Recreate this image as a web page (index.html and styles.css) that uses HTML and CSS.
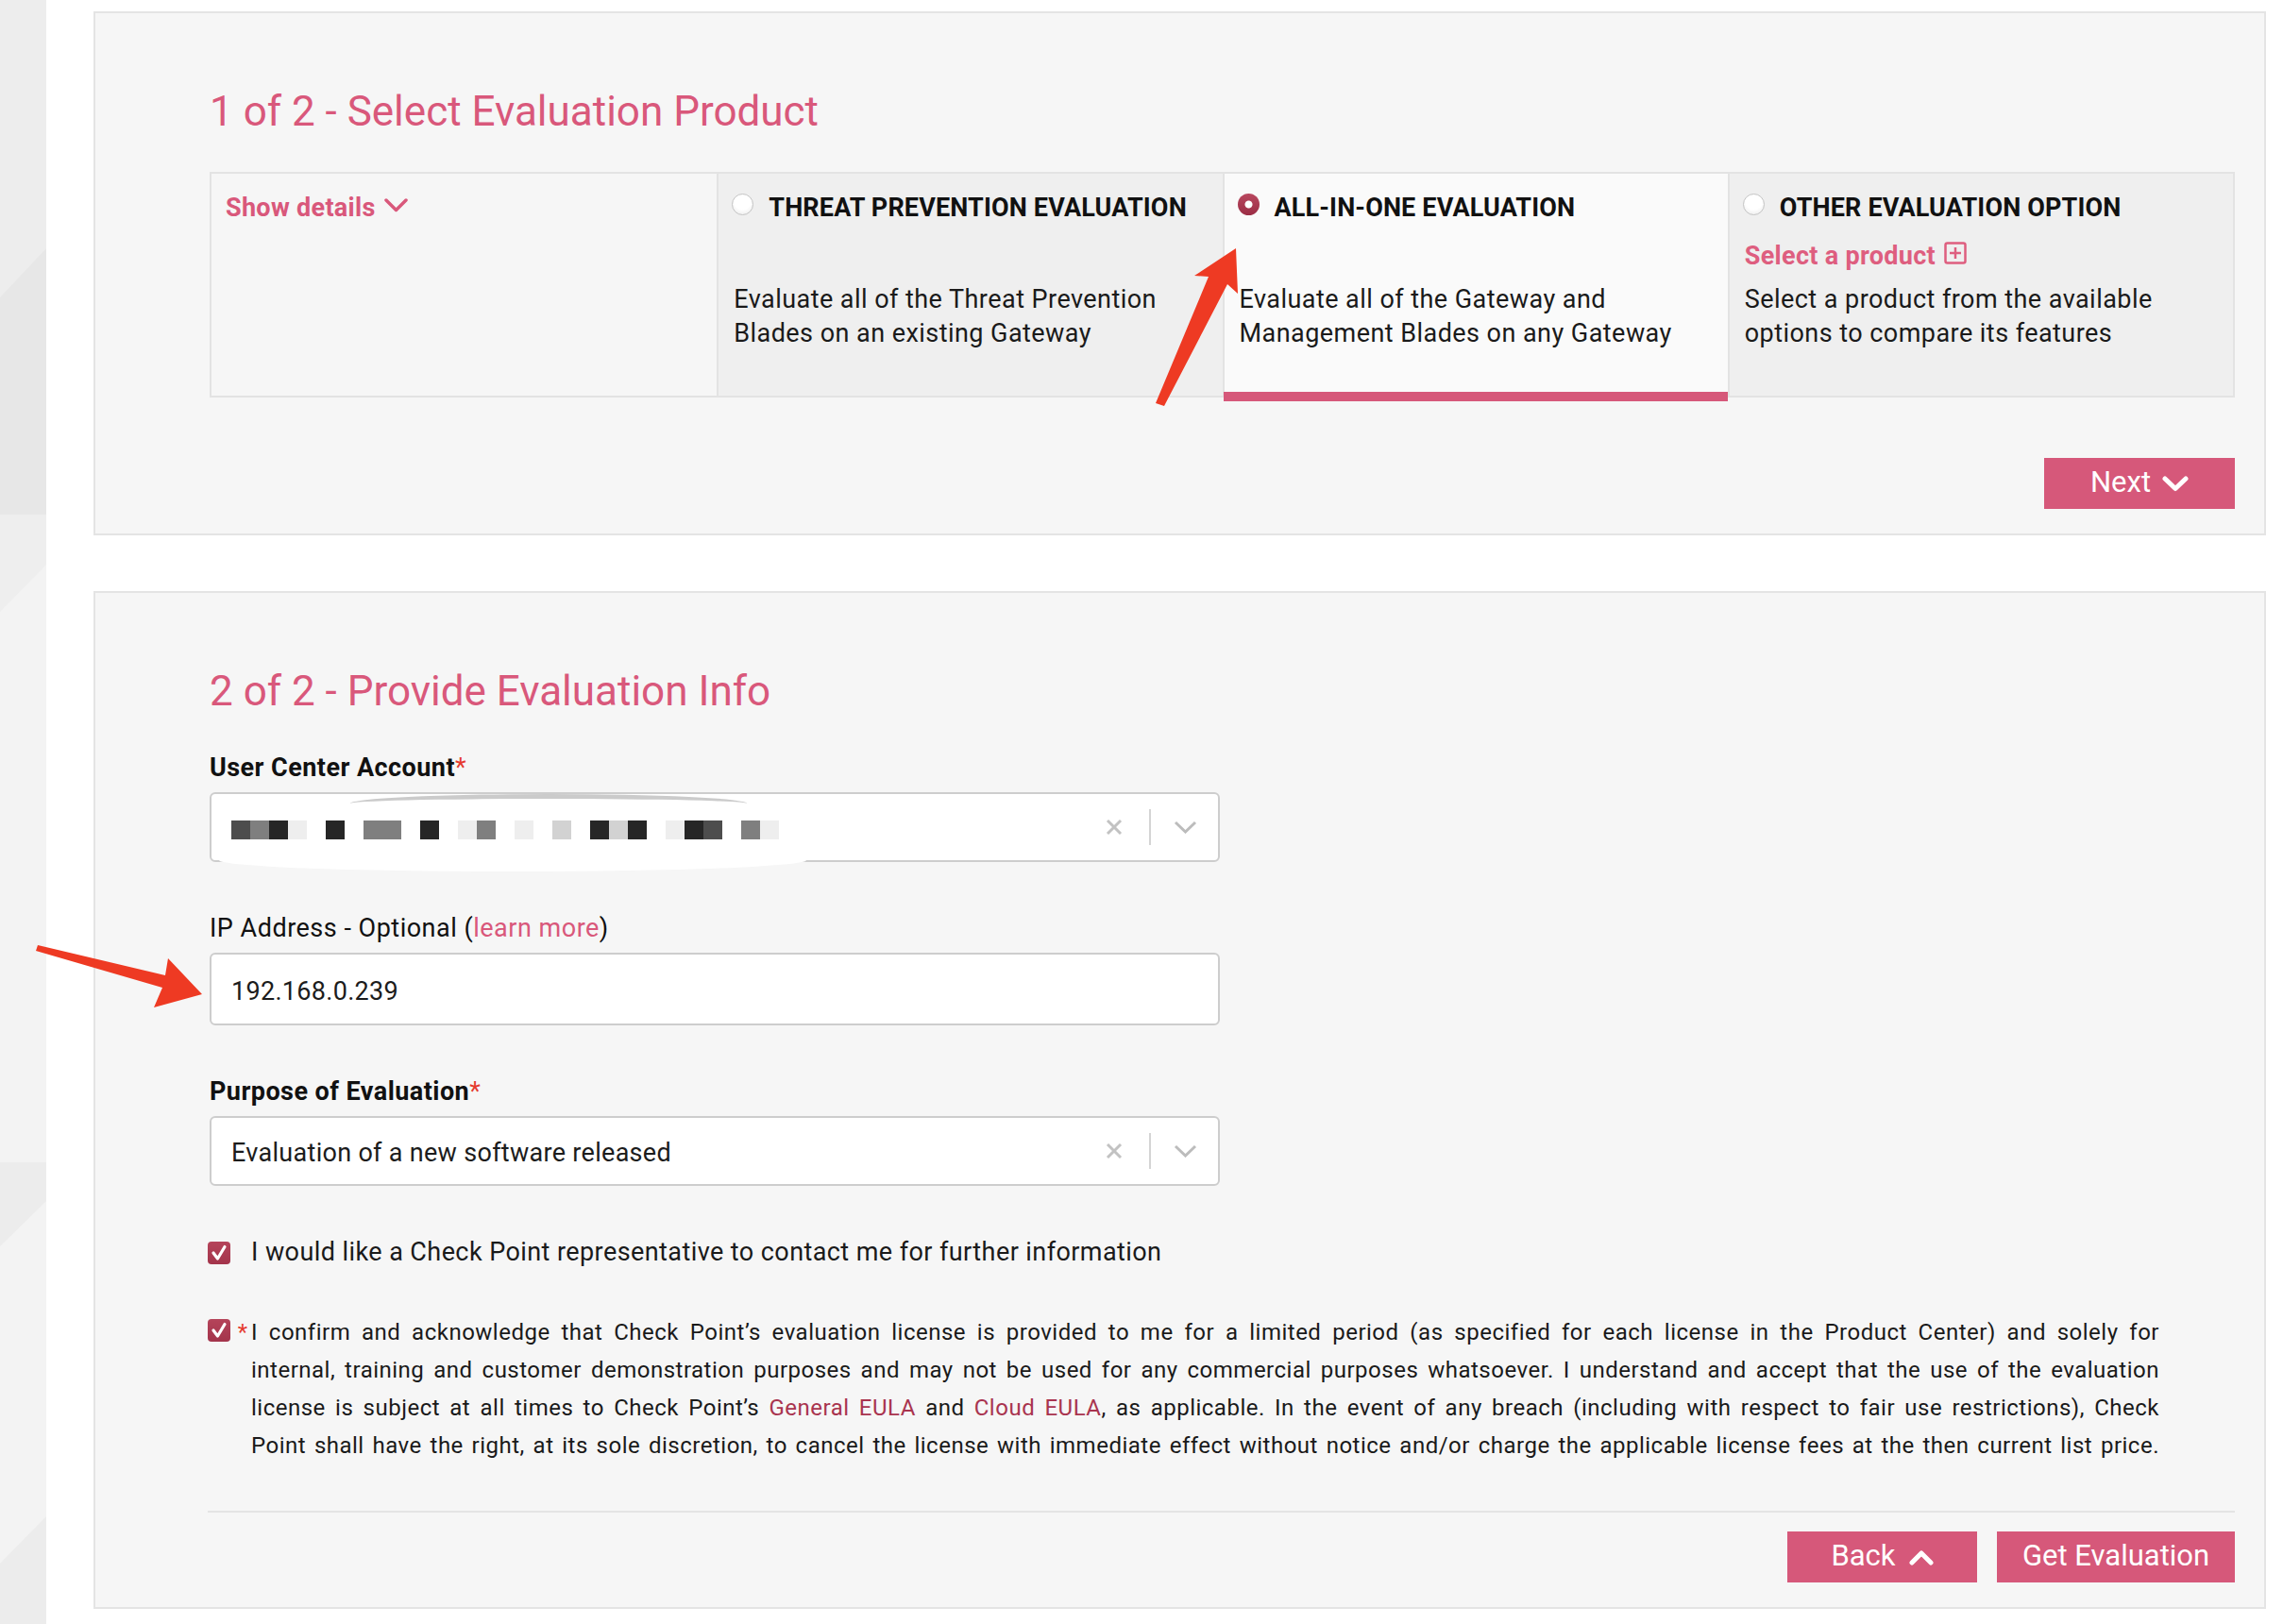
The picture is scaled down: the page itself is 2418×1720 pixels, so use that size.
FILE: index.html
```html
<!DOCTYPE html>
<html lang="en">
<head>
<meta charset="utf-8">
<title>Evaluation</title>
<link rel="stylesheet" href="styles.css">
</head>
<body>
<div class="page">
  <aside class="strip">
    <svg width="49" height="1720" viewBox="0 0 49 1720">
      <rect x="0" y="0" width="49" height="1720" fill="#f3f3f3"/>
      <polygon points="0,0 49,0 49,263 0,315" fill="#ededed"/>
      <polygon points="0,315 49,263 49,545 0,545" fill="#e7e7e7"/>
      <polygon points="0,545 49,545 49,598 0,648" fill="#eeeeee"/>
      <polygon points="0,1231 49,1231 49,1272 0,1320" fill="#ececec"/>
      <polygon points="0,1656 49,1606 49,1720 0,1720" fill="#ececec"/>
    </svg>
  </aside>

  <main class="main">
    <section class="panel">
      <h2 class="step-title">1 of 2 - Select Evaluation Product</h2>
      <div class="tiles">
        <div class="tile tile-plain">
          <a class="show-details">Show details
            <svg class="chev-sm" width="25" height="15" viewBox="0 0 25 15"><polyline points="2,2 12.5,12.5 23,2" fill="none" stroke="#d9587b" stroke-width="3.5" stroke-linecap="round" stroke-linejoin="round"/></svg>
          </a>
        </div>
        <div class="tile">
          <div class="tile-head"><span class="radio"></span><span class="tile-title">THREAT PREVENTION EVALUATION</span></div>
          <div class="tile-link"></div>
          <p class="tile-desc">Evaluate all of the Threat Prevention Blades on an existing Gateway</p>
        </div>
        <div class="tile tile-selected">
          <div class="tile-head"><span class="radio radio-on"></span><span class="tile-title">ALL-IN-ONE EVALUATION</span></div>
          <div class="tile-link"></div>
          <p class="tile-desc">Evaluate all of the Gateway and Management Blades on any Gateway</p>
        </div>
        <div class="tile">
          <div class="tile-head"><span class="radio"></span><span class="tile-title">OTHER EVALUATION OPTION</span></div>
          <div class="tile-link">Select a product
            <svg width="24" height="24" viewBox="0 0 24 24"><rect x="1.5" y="1.5" width="21" height="21" rx="2" fill="none" stroke="#de5e7f" stroke-width="2.5"/><line x1="12" y1="6" x2="12" y2="18" stroke="#de5e7f" stroke-width="2.5"/><line x1="6" y1="12" x2="18" y2="12" stroke="#de5e7f" stroke-width="2.5"/></svg>
          </div>
          <p class="tile-desc">Select a product from the available options to compare its features</p>
        </div>
      </div>
      <div class="actions">
        <button class="btn btn-next">Next
          <svg width="28" height="17" viewBox="0 0 28 17"><polyline points="3,3 14,13.5 25,3" fill="none" stroke="#fff" stroke-width="5" stroke-linecap="round" stroke-linejoin="round"/></svg>
        </button>
      </div>
    </section>

    <section class="panel">
      <h2 class="step-title">2 of 2 - Provide Evaluation Info</h2>
      <div class="form">
        <div class="field">
          <label class="field-label strong">User Center Account<span class="req">*</span></label>
          <div class="select select-redacted">
            <div class="select-value">
              <div class="mosaic">
                <span class="px px4"></span><span class="px px3"></span><span class="px px5"></span><span class="px px1"></span><span class="px px0"></span>
                <span class="px px5"></span><span class="px px0"></span><span class="px px3"></span><span class="px px3"></span><span class="px px0"></span>
                <span class="px px5"></span><span class="px px0"></span><span class="px px1"></span><span class="px px3"></span><span class="px px0"></span>
                <span class="px px1"></span><span class="px px0"></span><span class="px px2"></span><span class="px px0"></span><span class="px px5"></span>
                <span class="px px2"></span><span class="px px5"></span><span class="px px0"></span><span class="px px1"></span><span class="px px5"></span>
                <span class="px px4"></span><span class="px px0"></span><span class="px px3"></span><span class="px px1"></span>
              </div>
            </div>
            <span class="redact-top"></span>
            <span class="redact-bottom"></span>
            <svg class="select-clear" width="18" height="18" viewBox="0 0 18 18"><line x1="2" y1="2" x2="16" y2="16" stroke="#c2c2c2" stroke-width="3"/><line x1="16" y1="2" x2="2" y2="16" stroke="#c2c2c2" stroke-width="3"/></svg>
            <span class="select-sep"></span>
            <svg class="select-caret" width="25" height="14" viewBox="0 0 25 14"><polyline points="2,2 12.5,12 23,2" fill="none" stroke="#bcbcbc" stroke-width="3"/></svg>
          </div>
        </div>

        <div class="field">
          <label class="field-label">IP Address - Optional (<a class="link-pink">learn more</a>)</label>
          <div class="input">192.168.0.239</div>
        </div>

        <div class="field">
          <label class="field-label strong">Purpose of Evaluation<span class="req">*</span></label>
          <div class="select">
            <div class="select-value">Evaluation of a new software released</div>
            <svg class="select-clear" width="18" height="18" viewBox="0 0 18 18"><line x1="2" y1="2" x2="16" y2="16" stroke="#c2c2c2" stroke-width="3"/><line x1="16" y1="2" x2="2" y2="16" stroke="#c2c2c2" stroke-width="3"/></svg>
            <span class="select-sep"></span>
            <svg class="select-caret" width="25" height="14" viewBox="0 0 25 14"><polyline points="2,2 12.5,12 23,2" fill="none" stroke="#bcbcbc" stroke-width="3"/></svg>
          </div>
        </div>
      </div>

      <div class="checks">
        <div class="check-row">
          <span class="checkbox"><svg width="24" height="24" viewBox="0 0 24 24"><polyline points="6,12 10.5,18 18,5.5" fill="none" stroke="#fff" stroke-width="3.2" stroke-linecap="round" stroke-linejoin="round"/></svg></span>
          <span class="star"></span>
          <span class="check-text">I would like a Check Point representative to contact me for further information</span>
        </div>
        <div class="check-row">
          <span class="checkbox"><svg width="24" height="24" viewBox="0 0 24 24"><polyline points="6,12 10.5,18 18,5.5" fill="none" stroke="#fff" stroke-width="3.2" stroke-linecap="round" stroke-linejoin="round"/></svg></span>
          <span class="star">*</span>
          <p class="legal">I confirm and acknowledge that Check Point’s evaluation license is provided to me for a limited period (as specified for each license in the Product Center) and solely for<br>internal, training and customer demonstration purposes and may not be used for any commercial purposes whatsoever. I understand and accept that the use of the evaluation<br>license is subject at all times to Check Point’s <a class="link-dark">General EULA</a> and <a class="link-dark">Cloud EULA</a>, as applicable. In the event of any breach (including with respect to fair use restrictions), Check<br>Point shall have the right, at its sole discretion, to cancel the license with immediate effect without notice and/or charge the applicable license fees at the then current list price.</p>
        </div>
      </div>

      <div class="rule"></div>

      <div class="footer">
        <button class="btn btn-back">Back
          <svg width="26" height="17" viewBox="0 0 26 17"><polyline points="3,14 13,4 23,14" fill="none" stroke="#fff" stroke-width="5" stroke-linecap="round" stroke-linejoin="round"/></svg>
        </button>
        <button class="btn btn-get">Get Evaluation</button>
      </div>
    </section>
  </main>

  <svg class="annotations" width="2418" height="1720" viewBox="0 0 2418 1720">
    <polygon points="1309,263 1311,311 1300,301 1233,430 1224,427 1280,293 1265,292" fill="#ee3a23"/>
    <polygon points="40,1001 175,1033 178,1015 214,1053 163,1067 172,1046 38,1007" fill="#ee3a23"/>
  </svg>
</div>
</body>
</html>
```

FILE: styles.css
```css
* { box-sizing: border-box; }

html, body {
  margin: 0;
  padding: 0;
  background: #ffffff;
}

body {
  font-family: Roboto, "Liberation Sans", Arial, sans-serif;
  color: #1c1c1c;
  width: 2418px;
  height: 1720px;
  overflow: hidden;
}

.page {
  position: relative;
  display: flex;
  align-items: flex-start;
  width: 2418px;
  height: 1720px;
}

.strip {
  flex: none;
  width: 49px;
  height: 1720px;
}

.strip svg { display: block; }

.main {
  flex: none;
  width: 2301px;
  margin-left: 50px;
  padding-top: 12px;
}

.panel {
  background: #f6f6f6;
  border: 2px solid #e4e4e4;
  padding: 78px 31px 26px 121px;
}

.panel + .panel { margin-top: 59px; }

.step-title {
  margin: 0;
  font-size: 44px;
  line-height: 52px;
  font-weight: 400;
  color: #d9587b;
}

/* product tiles */
.tiles {
  margin-top: 38px;
  display: grid;
  grid-template-columns: repeat(4, 1fr);
  border: 2px solid #e3e3e3;
}

.tile {
  position: relative;
  background: #efefef;
  padding: 19px 16px 48px 16px;
}

.tile + .tile { border-left: 2px solid #e3e3e3; }

.tile-plain { background: #f6f6f6; padding-left: 15px; }

.tile-selected { background: #fafafa; }

.tile-selected::after {
  content: "";
  position: absolute;
  left: -1px;
  right: 0;
  bottom: -6px;
  height: 10px;
  background: #d6587a;
}

.show-details {
  display: inline-flex;
  align-items: center;
  gap: 9px;
  font-size: 27px;
  font-weight: 700;
  line-height: 34px;
  letter-spacing: 0.3px;
  color: #d9587b;
}

.chev-sm { margin-top: -6px; }

.tile-head {
  display: flex;
  align-items: flex-start;
  gap: 16px;
  height: 34px;
}

.radio {
  flex: none;
  width: 23px;
  height: 23px;
  margin-left: -2px;
  margin-top: 2px;
  border-radius: 50%;
  border: 1px solid #c4c4c4;
  background: radial-gradient(circle at 50% 35%, #ffffff 0, #ffffff 50%, #e6e6e6 100%);
}

.radio-on {
  border: none;
  background:
    radial-gradient(circle, #ffffff 0, #ffffff 3.5px, transparent 4.5px),
    linear-gradient(#b9485f, #9b2d45);
}

.tile-title {
  font-size: 27px;
  font-weight: 700;
  line-height: 34px;
  letter-spacing: 0.15px;
  color: #111111;
  white-space: nowrap;
}

.tile-link {
  display: flex;
  align-items: center;
  gap: 9px;
  height: 34px;
  margin-top: 17px;
  font-size: 27px;
  font-weight: 700;
  line-height: 34px;
  letter-spacing: 0.3px;
  color: #de5e7f;
}

.tile-link svg { margin-top: -6px; }

.tile-desc {
  margin: 11px 0 0 0;
  font-size: 27px;
  line-height: 36px;
  letter-spacing: 0.45px;
  color: #1a1a1a;
}

/* buttons */
.actions {
  display: flex;
  justify-content: flex-end;
  margin-top: 64px;
}

.btn {
  display: inline-flex;
  align-items: center;
  justify-content: center;
  gap: 12px;
  height: 54px;
  padding: 0 0 3px 0;
  border: 0;
  background: #d6587a;
  color: #ffffff;
  font-family: Roboto, "Liberation Sans", Arial, sans-serif;
  font-size: 31px;
  font-weight: 400;
  line-height: 1;
}

.btn svg { margin-top: 3px; }

.btn-next { width: 202px; }
.btn-back { width: 201px; gap: 14px; }
.btn-get { width: 252px; }

/* form */
.form { margin-top: 38px; }

.field + .field { margin-top: 53px; }

.field-label {
  display: block;
  margin-bottom: 9px;
  font-size: 27px;
  line-height: 34px;
  letter-spacing: 0.5px;
  color: #111111;
}

.field-label.strong { font-weight: 700; letter-spacing: 0.45px; }

.req {
  color: #e53b2f;
  font-weight: 400;
}

.link-pink { color: #d9587b; }
.link-dark { color: #a9344f; }

.select,
.input {
  display: flex;
  align-items: center;
  width: 1070px;
  height: 74px;
  padding-left: 21px;
  background: #ffffff;
  border: 2px solid #cdcdcd;
  border-radius: 6px;
  font-size: 27px;
  letter-spacing: 0.3px;
  color: #1c1c1c;
}

.input { height: 77px; padding-top: 4px; }

.select { position: relative; padding-right: 22px; }

.select-value {
  flex: 1;
  display: flex;
  align-items: center;
  padding-top: 4px;
}

.select-clear { flex: none; }

.select-sep {
  flex: none;
  width: 2px;
  height: 38px;
  margin: 0 24px 0 28px;
  background: #d4d4d4;
}

.select-caret { flex: none; }

.mosaic {
  display: flex;
  margin-top: 2px;
}

.px { width: 20px; height: 20px; }
.px0 { background: #ffffff; }
.px1 { background: #eeeeee; }
.px2 { background: #d2d2d2; }
.px3 { background: #7f7f7f; }
.px4 { background: #4d4d4d; }
.px5 { background: #262626; }

.redact-top {
  position: absolute;
  left: 147px;
  top: 0;
  width: 420px;
  height: 12px;
  border-top: 5px solid #cbcbcb;
  border-radius: 50% 50% 0 0 / 10px 10px 0 0;
}

.redact-bottom {
  position: absolute;
  left: 8px;
  bottom: -12px;
  width: 622px;
  height: 18px;
  background: #ffffff;
  border-radius: 0 0 50% 50% / 0 0 12px 12px;
}

/* checkboxes */
.checks { margin-top: 53px; }

.check-row {
  display: grid;
  grid-template-columns: 22px 22px 1fr;
  align-items: start;
}

.check-row + .check-row { margin-top: 48px; }

.checkbox {
  display: block;
  width: 24px;
  height: 24px;
  margin-left: -2px;
  margin-top: 6px;
  border-radius: 4px;
  background: linear-gradient(#b5445a, #a3344b);
}

.checkbox svg { display: block; }

.star {
  text-align: right;
  padding-right: 4px;
  font-size: 24px;
  line-height: 40px;
  color: #e53b2f;
}

.check-text {
  font-size: 27px;
  line-height: 34px;
  letter-spacing: 0.42px;
  color: #1a1a1a;
}

.legal {
  margin: 0 80px 0 0;
  font-size: 24px;
  line-height: 40px;
  letter-spacing: 0.5px;
  text-align: justify;
  text-align-last: justify;
  color: #1a1a1a;
}

.rule {
  margin-top: 49px;
  height: 2px;
  margin-left: -2px;
  background: #e4e4e4;
}

.footer {
  display: flex;
  justify-content: flex-end;
  gap: 21px;
  margin-top: 20px;
}

.annotations {
  position: absolute;
  left: 0;
  top: 0;
  pointer-events: none;
}
```
